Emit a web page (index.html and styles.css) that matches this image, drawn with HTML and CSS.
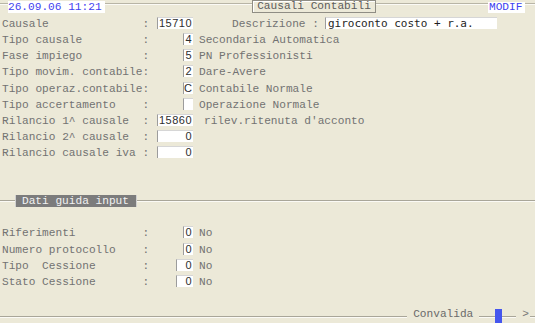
FILE: index.html
```html
<!DOCTYPE html>
<html>
<head>
  <title>Causali Contabili</title>
  <link rel="stylesheet" href="styles.css">
</head>
<body>
  <div class="screen">
    <div class="row head">
      <span class="hline first"></span>
      <span class="date">26.09.06 11:21</span>
      <span class="hline gap1"></span>
      <span class="title">Causali Contabili</span>
      <span class="hline gap2"></span>
      <span class="mode">MODIF</span>
      <span class="hline"></span>
    </div>

    <div class="row">
      <span class="lbl">Causale              :</span>
      <span class="fld big">15710</span>
      <span class="lbl desc">Descrizione :</span>
      <span class="fld wide">giroconto costo + r.a.</span>
    </div>
    <div class="row">
      <span class="lbl">Tipo causale         :</span>
      <span class="fld one">4</span>
      <span class="txt">Secondaria Automatica</span>
    </div>
    <div class="row">
      <span class="lbl">Fase impiego         :</span>
      <span class="fld one">5</span>
      <span class="txt">PN Professionisti</span>
    </div>
    <div class="row">
      <span class="lbl">Tipo movim. contabile:</span>
      <span class="fld one">2</span>
      <span class="txt">Dare-Avere</span>
    </div>
    <div class="row">
      <span class="lbl">Tipo operaz.contabile:</span>
      <span class="fld one">C</span>
      <span class="txt">Contabile Normale</span>
    </div>
    <div class="row">
      <span class="lbl">Tipo accertamento    :</span>
      <span class="fld one"></span>
      <span class="txt">Operazione Normale</span>
    </div>
    <div class="row">
      <span class="lbl">Rilancio 1^ causale  :</span>
      <span class="fld big">15860</span>
      <span class="txt far">rilev.ritenuta d'acconto</span>
    </div>
    <div class="row">
      <span class="lbl">Rilancio 2^ causale  :</span>
      <span class="fld big">0</span>
    </div>
    <div class="row">
      <span class="lbl">Rilancio causale iva :</span>
      <span class="fld big">0</span>
    </div>
    <div class="row"></div>
    <div class="row"></div>

    <div class="row sect">
      <span class="sline lead"></span>
      <span class="tab">Dati guida input</span>
      <span class="sline"></span>
    </div>
    <div class="row"></div>

    <div class="row">
      <span class="lbl">Riferimenti          :</span>
      <span class="fld one">0</span>
      <span class="txt">No</span>
    </div>
    <div class="row">
      <span class="lbl">Numero protocollo    :</span>
      <span class="fld one">0</span>
      <span class="txt">No</span>
    </div>
    <div class="row">
      <span class="lbl">Tipo  Cessione       :</span>
      <span class="fld two">0</span>
      <span class="txt">No</span>
    </div>
    <div class="row">
      <span class="lbl">Stato Cessione       :</span>
      <span class="fld two">0</span>
      <span class="txt">No</span>
    </div>
    <div class="row"></div>

    <div class="row foot">
      <span class="bline"></span>
      <span class="btn">Convalida</span>
      <span class="bline short"></span>
      <span class="cursor"></span>
      <span class="bline shorter"></span>
      <span class="more">&gt;</span>
      <span class="bline last"></span>
    </div>
  </div>
</body>
</html>
```

FILE: styles.css
```css
body {
  margin: 0;
  background-color: #ECE9D8;
  font-family: "Liberation Mono", "Courier New", monospace;
  font-size: 11.15px;
  color: #727272;
}

.screen {
  display: grid;
  grid-template-rows: repeat(20, 1fr);
  width: 535px;
  height: 323px;
}

.row {
  display: flex;
  align-items: flex-start;
  line-height: 16px;
  white-space: pre;
}

/* header */
.hline {
  flex: 1;
  margin-top: 3px;
  border-top: 1px solid #b8b5a6;
  border-bottom: 1px solid #fbfaf5;
}

.hline.first {
  flex: 0 0 8px;
}

.hline.gap1 {
  flex: 0 0 147px;
}

.hline.gap2 {
  flex: 0 0 112px;
}

.date, .mode {
  background: #fff;
  color: #3f3ff0;
  line-height: 12px;
}

.date {
  margin-top: 1px;
  width: 97px;
}

.mode {
  margin-top: 2px;
  line-height: 11px;
  width: 37px;
  padding-left: 1px;
  box-sizing: border-box;
}

.title {
  width: 124px;
  height: 13px;
  box-sizing: border-box;
  border: 1px solid #8f8d84;
  box-shadow: inset 1px 1px #fff;
  line-height: 11px;
  text-align: center;
  color: #5c5c5c;
}

/* fields */
.lbl {
  width: 157px;
  padding-left: 2px;
  box-sizing: border-box;
}

.lbl.desc {
  width: auto;
  padding-left: 0;
  margin-left: 39px;
}

.fld {
  margin-top: 1px;
  height: 12px;
  box-sizing: border-box;
  background: #fff;
  border-left: 1px solid #9c9c9c;
  border-top: 1px solid #d6d6d6;
  font-family: "Liberation Sans", Arial, sans-serif;
  font-size: 11px;
  letter-spacing: 0.5px;
  line-height: 11px;
  color: #2e2e2e;
  text-align: right;
  padding-right: 1px;
}

.fld.big {
  width: 36px;
}

.fld.one {
  margin-left: 26px;
  width: 10px;
}

.fld.two {
  margin-left: 19px;
  width: 17px;
}

.fld.wide {
  margin-left: 6px;
  width: 172px;
  text-align: left;
  padding-left: 2px;
  font-family: "DejaVu Sans Mono", monospace;
  letter-spacing: 0;
  color: #1e1e1e;
}

.txt {
  margin-left: 6px;
}

.txt.far {
  margin-left: 11px;
}

/* section tab */
.sect {
  align-items: center;
}

.sline {
  flex: 1;
  border-top: 1px solid #a9a699;
  border-bottom: 1px solid #fbfaf5;
}

.sline.lead {
  flex: 0 0 15px;
}

.tab {
  background: #7c7c7c;
  color: #f2f2f2;
  line-height: 12px;
  width: 122px;
  padding-left: 6px;
  box-sizing: border-box;
  border-left: 1px solid #d0d0d0;
  border-right: 1px solid #d0d0d0;
}

/* footer */
.bline {
  flex: 1;
  margin-top: 10px;
  border-top: 1px solid #a9a699;
  border-bottom: 1px solid #fbfaf5;
}

.bline.short {
  flex: 0 0 16px;
}

.bline.shorter {
  flex: 0 0 14px;
}

.bline.last {
  flex: 0 0 5px;
}

.btn {
  padding: 0 6px 0 6px;
  color: #6a6a6a;
}

.cursor {
  margin-top: 3px;
  width: 7px;
  height: 14px;
  background: #4556ee;
}

.more {
  padding: 0 1px 0 6px;
  color: #777;
}
```
